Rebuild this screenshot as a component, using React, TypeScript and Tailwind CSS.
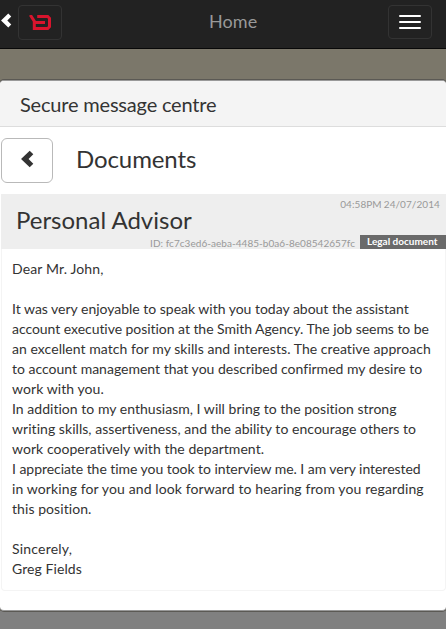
function Chevron({ className }: { className: string }) {
  return (
    <svg viewBox="0 0 12 16" className={className} fill="currentColor" aria-hidden="true">
      <path d="M8.4 0.6 11.6 3.8 7.4 8 11.6 12.2 8.4 15.4 0.7 8Z" />
    </svg>
  );
}

function Logo() {
  return (
    <svg width="22" height="15" viewBox="0 0 22 15" fill="none" stroke="#d8142d" strokeWidth="3" aria-hidden="true">
      <path d="M1.3 0 5.3 6.2V13.5H18.7L20.5 11.7V3.3L18.7 1.5H8.2" />
      <path d="M4.5 7.5H16" />
    </svg>
  );
}

type Line = { text: string; spacing: string };

const paragraphs: Line[][] = [
  [{ text: "Dear Mr. John,", spacing: "tracking-[0.14px]" }],
  [],
  [
    { text: "It was very enjoyable to speak with you today about the assistant", spacing: "tracking-[-0.015px]" },
    { text: "account executive position at the Smith Agency. The job seems to be", spacing: "tracking-[-0.045px]" },
    { text: "an excellent match for my skills and interests. The creative approach", spacing: "tracking-[0.055px]" },
    { text: "to account management that you described confirmed my desire to", spacing: "tracking-normal" },
    { text: "work with you.", spacing: "tracking-[0.07px]" },
  ],
  [
    { text: "In addition to my enthusiasm, I will bring to the position strong", spacing: "tracking-[0.03px]" },
    { text: "writing skills, assertiveness, and the ability to encourage others to", spacing: "tracking-[0.045px]" },
    { text: "work cooperatively with the department.", spacing: "tracking-[0.05px]" },
  ],
  [
    { text: "I appreciate the time you took to interview me. I am very interested", spacing: "tracking-[-0.045px]" },
    { text: "in working for you and look forward to hearing from you regarding", spacing: "tracking-[0.11px]" },
    { text: "this position.", spacing: "tracking-[0.07px]" },
  ],
  [],
  [{ text: "Sincerely,", spacing: "tracking-[0.2px]" }],
  [{ text: "Greg Fields", spacing: "tracking-[0.08px]" }],
];

export default function App() {
  return (
    <div className="flex h-[629px] w-[446px] flex-col overflow-hidden bg-[#808080] font-['Lato',sans-serif] text-[#333] [font-variant-ligatures:none]">
      <nav className="flex h-[49px] shrink-0 items-start border-b border-[#080808] bg-[#222]">
        <Chevron className="mt-[13px] h-[15px] w-[12px] text-white" />
        <button className="mt-[5px] ml-[6px] flex h-[35px] w-11 items-center justify-center rounded border border-[#333]">
          <Logo />
        </button>
        <div className="mt-[9px] flex-1 pl-[147px] text-lg leading-[25px] tracking-[0.1px] text-[#999]">Home</div>
        <button className="mt-[5px] mr-[14px] flex h-[34px] w-11 flex-col items-center justify-center gap-1 rounded border border-[#333]" aria-label="Menu">
          <span className="h-0.5 w-[22px] rounded-[1px] bg-white" />
          <span className="h-0.5 w-[22px] rounded-[1px] bg-white" />
          <span className="h-0.5 w-[22px] rounded-[1px] bg-white" />
        </button>
      </nav>
      <main className="h-[562px] shrink-0 bg-[#7b776a] pt-[31px]">
        <section className="flex h-[531px] flex-col rounded border-y border-[#999] bg-white shadow-[0_0_0_1px_#5b5954]">
          <h1 className="flex h-[46px] shrink-0 items-center rounded-t border-b border-[#ddd] bg-[#f4f4f4] pl-5 text-xl tracking-[-0.19px]">Secure message centre</h1>
          <div className="mt-[11px] flex h-[45px] shrink-0 items-center pl-px">
            <button className="flex h-[45px] w-[52px] items-center justify-center rounded-md border border-[#b9b9b9]" aria-label="Back">
              <Chevron className="mr-px mb-[3px] h-[18px] w-[14px]" />
            </button>
            <h2 className="ml-[23px] pb-1 text-2xl tracking-[-0.1px]">Documents</h2>
          </div>
          <article className="mt-[11px] ml-px h-[397px] shrink-0 rounded-b border border-t-0 border-[#f4f4f4]">
            <header className="-mx-px flex h-[55px] flex-col bg-[#eee]">
              <div className="flex h-[41px] justify-between pr-[6px] pl-[15px]">
                <h3 className="mt-[9px] text-2xl leading-[34px]">Personal Advisor</h3>
                <time className="mt-[3px] text-[10px] leading-[15px] tracking-[0.08px] [word-spacing:-0.6px] text-[#999]">04:58PM 24/07/2014</time>
              </div>
              <div className="flex h-[14px] justify-end">
                <span className="mr-[5px] pt-[1px] text-[10px] leading-[15px] tracking-[0.04px] whitespace-nowrap text-[#999]">ID: fc7c3ed6-aeba-4485-b0a6-8e08542657fc</span>
                <span className="h-[14px] w-[86px] bg-[#6a6a6a] pl-[7px] text-[10px] leading-[13px] font-bold whitespace-nowrap text-white">Legal document</span>
              </div>
            </header>
            <div className="pt-[10px] pl-[10px] text-sm leading-5 whitespace-nowrap">
              {paragraphs.map((lines, i) => (
                <p key={i} className="min-h-5">
                  {lines.map((line) => (
                    <span key={line.text} className={`block ${line.spacing}`}>{line.text}</span>
                  ))}
                </p>
              ))}
            </div>
          </article>
        </section>
      </main>
    </div>
  );
}
